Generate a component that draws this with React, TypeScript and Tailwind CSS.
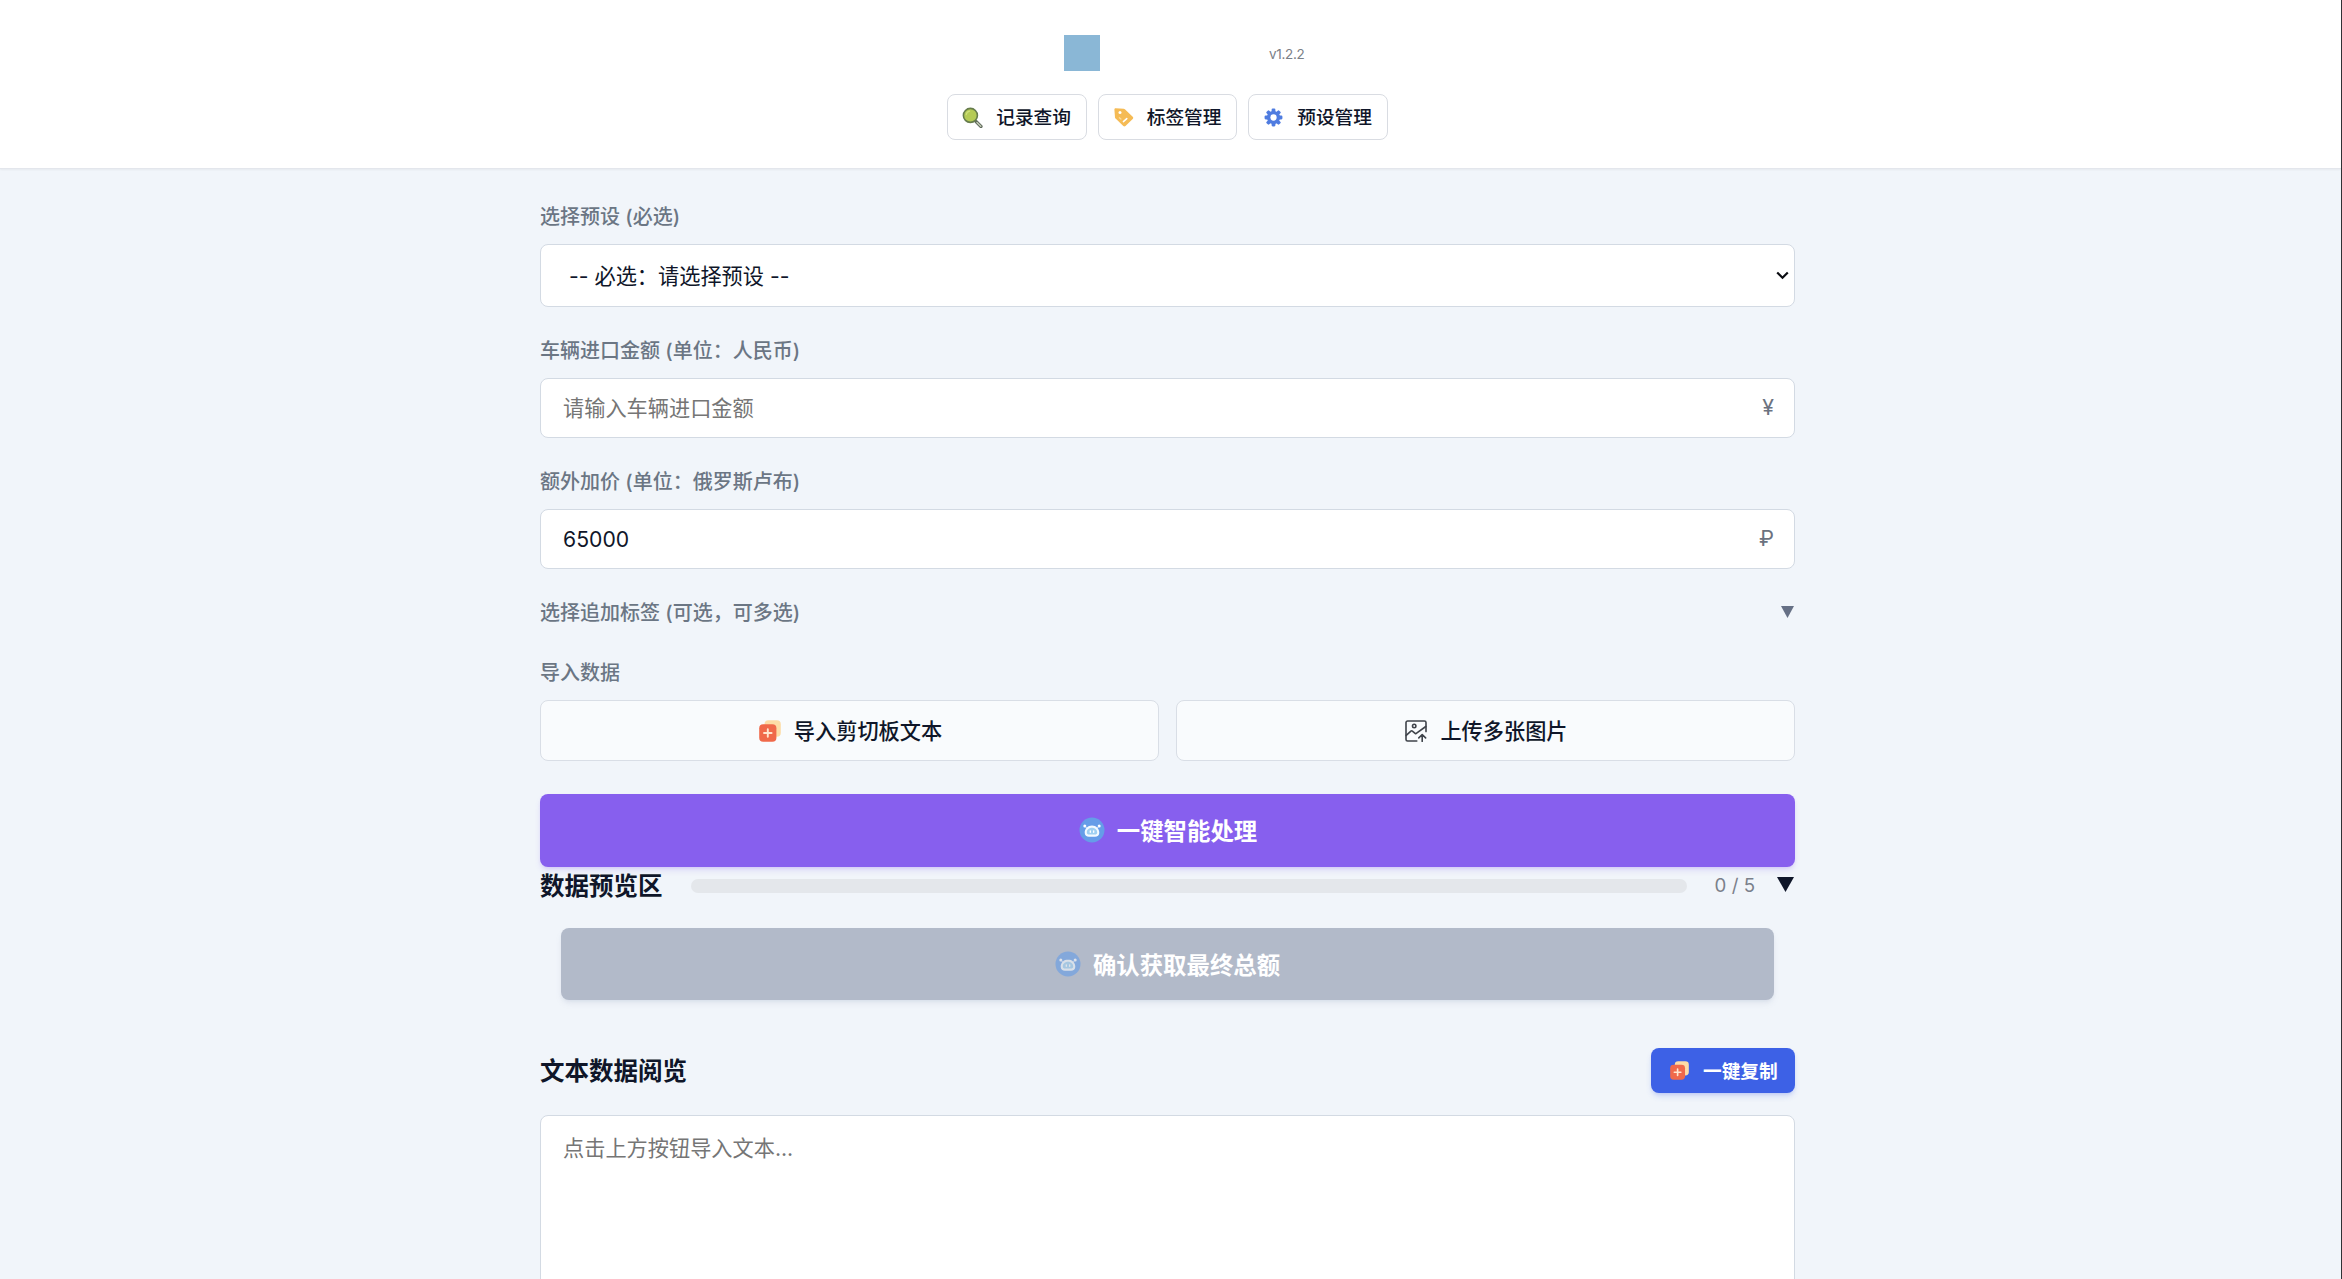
import React, { useState } from "react";

const navItems = [
  { label: "记录查询", icon: <SearchIcon /> },
  { label: "标签管理", icon: <TagIcon /> },
  { label: "预设管理", icon: <GearIcon /> },
];

function SearchIcon() {
  return (
    <svg className="h-[21px] w-[21px]" viewBox="0 0 21 21" fill="none">
      <path d="M14 14.5l5 5" stroke="#5f6a5c" strokeWidth="3.2" strokeLinecap="round" />
      <path d="M15 15.4l3.8 3.9" stroke="#c3cbb4" strokeWidth="1.4" strokeLinecap="round" />
      <circle cx="8.4" cy="8.4" r="7" fill="#b5cb55" stroke="#667c4c" strokeWidth="1.6" />
      <path d="M4.2 7.6a4.4 4.4 0 0 1 3.4-3.4" stroke="#cfe07c" strokeWidth="1.2" strokeLinecap="round" />
    </svg>
  );
}

function TagIcon() {
  return (
    <svg className="h-[21px] w-[21px]" viewBox="0 0 21 21" fill="none">
      <path
        d="M1.4 2.6c0-.8.6-1.3 1.3-1.3l8 .5c.5 0 .9.2 1.2.5l7.8 7.4c.7.6.7 1.6 0 2.2l-7.2 7.2c-.7.6-1.6.6-2.2 0L2.6 11.6c-.4-.3-.5-.7-.6-1.2z"
        fill="#f5bb55"
      />
      <circle cx="7" cy="5.6" r="1.5" fill="#fff" />
      <path d="M10.4 14.6l3.4-3" stroke="#fff" strokeWidth="1.5" strokeLinecap="round" />
      <path d="M6.4 10.8l1.5 1.2" stroke="#fbdc9d" strokeWidth="1.3" strokeLinecap="round" />
    </svg>
  );
}

function GearIcon() {
  return (
    <svg className="h-[19px] w-[19px]" viewBox="-10 -10 20 20">
      <g fill="#4f7ce0">
        {[0, 45, 90, 135].map((angle) => (
          <rect
            key={angle}
            x="-2"
            y="-9.4"
            width="4"
            height="18.8"
            rx="1.2"
            transform={`rotate(${angle})`}
          />
        ))}
        <circle r="6.9" />
      </g>
      <circle r="3.3" fill="#fff" />
    </svg>
  );
}

function CopyIcon({ className }: { className: string }) {
  return (
    <svg className={className} viewBox="0 0 22 22" fill="none">
      <rect x="5.5" y="0.2" width="16.3" height="16.6" rx="4" fill="#fddca6" />
      <rect x="0.2" y="4.3" width="17.2" height="17.4" rx="4" fill="#f0694a" />
      <path d="M8.8 9.2v7.6M5 13h7.6" stroke="#ffe6cf" strokeWidth="1.9" strokeLinecap="round" />
    </svg>
  );
}

function UploadIcon() {
  return (
    <svg
      className="h-[22px] w-[22px]"
      viewBox="0 0 22 22"
      fill="none"
      stroke="#3f434a"
      strokeWidth="1.6"
      strokeLinecap="round"
      strokeLinejoin="round"
    >
      <path d="M11.8 21H2.6A1.6 1.6 0 0 1 1 19.400V2.6A1.6 1.6 0 0 1 2.6 1h16.8A1.6 1.6 0 0 1 21 2.6v9" />
      <circle cx="9.2" cy="6" r="1.7" />
      <path d="M1.2 15.4l4.700-4.300c.5-.4 1-.4 1.500 0l2.700 2.200c.5.4 1.100.3 1.500-.1L20.800 6.500" />
      <path d="M17.200 21.400v-6.600M13.800 17.900l3.400-3.400 3.400 3.400" />
    </svg>
  );
}

function BotIcon() {
  return (
    <svg className="h-[26px] w-[26px]" viewBox="0 0 26 26" fill="none">
      <circle cx="13" cy="13" r="12.5" fill="#659de8" />
      <circle cx="5.8" cy="9" r="1.5" fill="#fff" />
      <circle cx="20.2" cy="9" r="1.5" fill="#fff" />
      <path d="M6.3 9.8l2.2 1.9M19.700 9.800l-2.200 1.900" stroke="#d8ebff" strokeWidth="1" />
      <path
        d="M13 8.600c-4.300 0-7.300 3.400-7.300 7.200 0 2.600 1.800 4 4.300 4h6c2.500 0 4.300-1.400 4.300-4 0-3.800-3-7.200-7.300-7.200z"
        fill="#f3faff"
      />
      <path
        d="M13 10.800c-3.100 0-5.200 2.200-5.200 4.600 0 1.300.9 2.100 2.300 2.100h5.800c1.400 0 2.300-.8 2.300-2.100 0-2.400-2.100-4.600-5.200-4.600z"
        fill="#9fd0f2"
      />
      <path d="M11.300 13.800v1.500M14.700 13.800v1.500" stroke="#fff" strokeWidth="1.300" strokeLinecap="round" />
    </svg>
  );
}

const Label = ({ children }: { children: React.ReactNode }) => (
  <label className="mb-3 block h-[30px] text-[20px] leading-[31px] font-medium text-[#6b7684]">
    {children}
  </label>
);

const App = () => {
  const [preset, setPreset] = useState("");
  const [amount, setAmount] = useState("");
  const [extra, setExtra] = useState("65000");
  const [text, setText] = useState("");

  return (
    <div className="h-[1279px] overflow-hidden border-r border-[#303236] bg-[#f1f5fa] font-[Inter,'Noto_Sans_CJK_SC',sans-serif] text-[#0f1629]">
      <header className="flex h-[169px] flex-col items-center border-b border-[#e3e6ec] bg-white pt-[35px] shadow-xs">
        <div className="flex h-9 w-[240px] items-center justify-between">
          <div className="ml-[13px] size-9 bg-[#8ab7d6]" />
          <span className="mt-[2px] mr-[-14px] text-[13.5px] tracking-[-0.3px] text-[#7b8087]">v1.2.2</span>
        </div>
        <nav className="mt-[23px] flex gap-[11px] pr-[6px]">
          {navItems.map((item) => (
            <button
              key={item.label}
              className="flex h-[46px] w-[139.5px] items-center rounded-lg border border-[#d9dce2] bg-white pl-[14px] text-[18.7px] font-medium"
            >
              <span className="mr-[13px] flex w-[21px] justify-center">{item.icon}</span>
              <span className="pt-[2px]">{item.label}</span>
            </button>
          ))}
        </nav>
      </header>

      <main className="ml-[540px] w-[1255px] pt-[33px]">
        <section className="mb-[29px]">
          <Label>选择预设 (必选)</Label>
          <div className="relative">
            <select
              className="block h-[63px] w-full appearance-none rounded-lg border border-[#d3dae3] bg-white pt-[3px] pl-[28px] text-[21.2px] text-[#0f1629]"
              value={preset}
              onChange={(e) => setPreset(e.target.value)}
            >
              <option value="">-- 必选：请选择预设 --</option>
            </select>
            <svg
              className="pointer-events-none absolute top-[27px] right-[6px] h-[9px] w-[13px]"
              viewBox="0 0 13 9"
              fill="none"
            >
              <path d="M1.2 1.5l5.3 5.3 5.3-5.3" stroke="#0b0d12" strokeWidth="2.2" />
            </svg>
          </div>
        </section>

        <section className="mb-[29px]">
          <Label>车辆进口金额 (单位：人民币)</Label>
          <div className="flex h-[60px] items-center rounded-lg border border-[#d3dae3] bg-white pr-[20px] pl-[22px]">
            <input
              className="h-full min-w-0 flex-1 text-[21.2px] outline-none placeholder:text-[#757575]"
              placeholder="请输入车辆进口金额"
              value={amount}
              onChange={(e) => setAmount(e.target.value)}
            />
            <span className="pb-px text-[21.3px] text-[#6b7280]">¥</span>
          </div>
        </section>

        <section className="mb-[29px]">
          <Label>额外加价 (单位：俄罗斯卢布)</Label>
          <div className="flex h-[60px] items-center rounded-lg border border-[#d3dae3] bg-white pr-[20px] pl-[22px]">
            <input
              className="h-full min-w-0 flex-1 text-[21.2px] outline-none"
              value={extra}
              onChange={(e) => setExtra(e.target.value)}
            />
            <span className="text-[21.3px] text-[#6b7280]">₽</span>
          </div>
        </section>

        <section className="mb-[18px] flex items-start justify-between">
          <Label>选择追加标签 (可选，可多选)</Label>
          <svg className="mt-[8px] mr-[1px] h-3 w-[13px]" viewBox="0 0 13 12">
            <path d="M0 0h13L6.5 12z" fill="#667085" />
          </svg>
        </section>

        <section>
          <Label>导入数据</Label>
          <div className="grid grid-cols-2 gap-[17px]">
            <button className="flex h-[61px] items-center justify-center gap-[13px] rounded-lg border border-[#d9dee6] bg-[#f9fbfd] pl-[2px] text-[21.2px] font-medium">
              <CopyIcon className="h-[22px] w-[22px]" />
              <span className="pt-[2px]">导入剪切板文本</span>
            </button>
            <button className="flex h-[61px] items-center justify-center gap-[13px] rounded-lg border border-[#d9dee6] bg-[#f9fbfd] pl-[2px] text-[21.2px] font-medium">
              <UploadIcon />
              <span className="pt-[2px]">上传多张图片</span>
            </button>
          </div>
        </section>

        <button className="mt-[33px] flex h-[73px] w-full items-center justify-center gap-3 rounded-lg bg-[#875fee] pl-px text-[23.4px] font-semibold text-white shadow-md shadow-[#875fee]/20">
          <span className="pb-px">
            <BotIcon />
          </span>
          <span className="pt-[2px]">一键智能处理</span>
        </button>

        <section className="flex h-[38px] items-center">
          <h2 className="pt-px text-[24.5px] font-bold">数据预览区</h2>
          <div className="ml-[28px] h-[14px] flex-1 rounded-full bg-[#e4e7eb]" />
          <span className="ml-[28px] text-[18.7px] text-[#7a808b]">0 / 5</span>
          <svg className="mr-[1px] mb-[3px] ml-[22px] h-[15px] w-[17px]" viewBox="0 0 17 15">
            <path d="M0 0h17L8.5 15z" fill="#0f1629" />
          </svg>
        </section>

        <button
          className="mt-[23px] ml-[21px] flex h-[72px] w-[1213px] items-center justify-center gap-3 rounded-lg bg-[#b2bac9] text-[23.4px] font-semibold text-white shadow-md shadow-[#8090b0]/15"
          disabled
        >
          <span className="opacity-60">
            <BotIcon />
          </span>
          <span className="pt-[3px]">确认获取最终总额</span>
        </button>

        <section className="mt-12 flex items-center justify-between">
          <h2 className="pt-[2px] text-[24.5px] font-bold">文本数据阅览</h2>
          <button className="flex h-[45px] w-[144px] items-center rounded-lg bg-[#3d61e6] pl-[19px] text-[18.7px] font-semibold text-white shadow-md shadow-[#3d61e6]/20">
            <CopyIcon className="mr-[14px] h-[19px] w-[19px]" />
            <span className="pt-[3px]">一键复制</span>
          </button>
        </section>
        <textarea
          className="mt-[22px] block h-[300px] w-full resize-none rounded-lg border border-[#d3dae3] bg-white px-[22px] py-[16px] text-[21.2px] leading-[32px] outline-none placeholder:text-[#757575]"
          placeholder="点击上方按钮导入文本..."
          value={text}
          onChange={(e) => setText(e.target.value)}
        />
      </main>
    </div>
  );
};

export default App;
